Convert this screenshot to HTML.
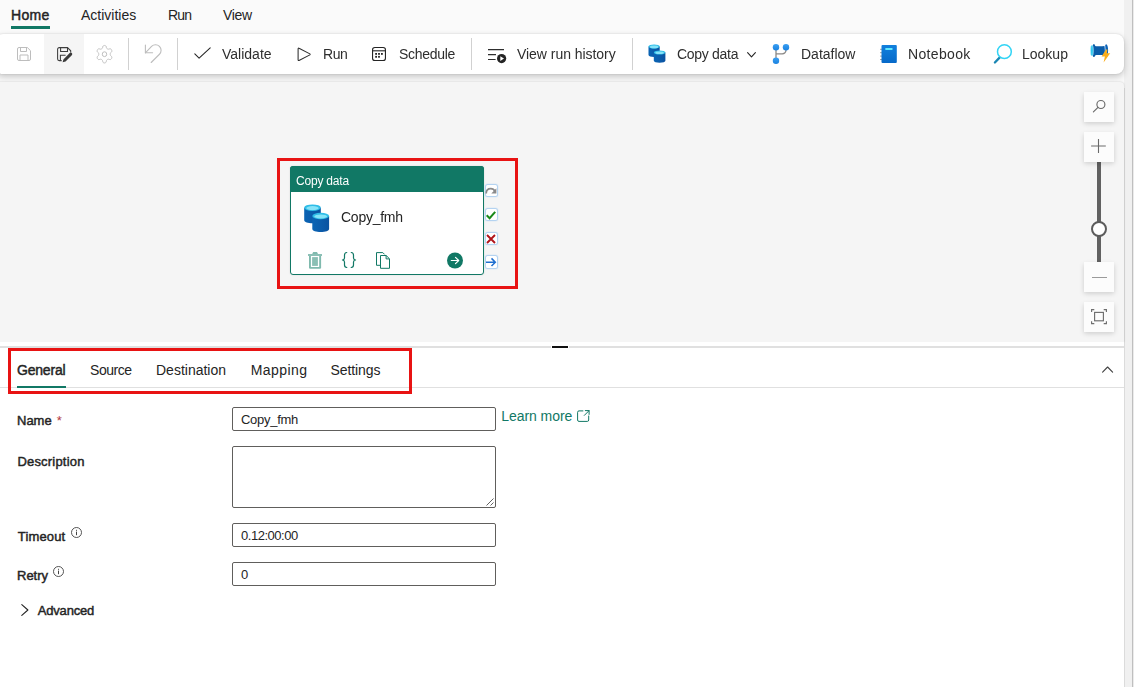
<!DOCTYPE html>
<html lang="en">
<head>
<meta charset="utf-8">
<title>Copy data</title>
<style>
*{box-sizing:border-box;margin:0;padding:0}
html,body{width:1134px;height:687px;overflow:hidden}
body{background:#fafafa;font-family:"Liberation Sans",sans-serif;color:#242424;position:relative}
.abs{position:absolute}
.t{position:absolute;white-space:nowrap;line-height:20px;font-size:14px;color:#242424;transform-origin:0 50%}
.sb{font-weight:normal;-webkit-text-stroke:.45px currentColor}
svg{position:absolute;overflow:visible}
/* top tabs */
#tabs .t{top:5px}
.g{will-change:transform}
#tb .t{will-change:transform;color:#2e2e2e}
/* toolbar */
#toolbar{left:-5px;top:34px;width:1129px;height:40px;background:#fff;border-radius:8px;box-shadow:0 0 2px rgba(0,0,0,.14),0 3px 7px rgba(0,0,0,.20)}
.sep{position:absolute;width:1px;background:#d1d1d1;top:38px;height:32px}
/* canvas */
#canvas{left:-5px;top:82px;width:1129px;height:260px;background:#f5f5f5;border-radius:4px 4px 0 0;box-shadow:0 0 2px rgba(0,0,0,.20)}
.zb{position:absolute;left:1084px;width:30px;height:30px;background:#fcfcfc;box-shadow:0 1.500px 5px rgba(0,0,0,.17)}
.hb{position:absolute;left:485.500px;width:11.500px;height:11.500px;background:#fff;border-radius:1.500px;box-shadow:0 0 1.200px 1px #a9cdf0}
/* panel */
#panel{left:0;top:346px;width:1124px;height:341px;background:#fff;border-top:2px solid #e0e0e0}
.inp{position:absolute;left:232px;width:264px;height:24px;border:1px solid #605e5c;border-radius:2px;background:#fff;font-size:13px;line-height:24px;padding-left:8px;color:#242424}
.lbl{position:absolute;left:17px;font-size:13px;-webkit-text-stroke:.45px currentColor;line-height:18px;color:#242424;white-space:nowrap}
</style>
</head>
<body>
<!-- right gutter -->
<div class="abs" style="left:1124px;top:0;width:10px;height:687px;background:#f0f0f0"></div>
<div class="abs" style="left:1132px;top:0;width:1px;height:687px;background:#bfbfbf"></div>
<div class="abs" style="left:1133px;top:0;width:1px;height:687px;background:#ebebeb"></div>
<div class="abs" style="left:1124px;top:88px;width:1px;height:599px;background:#dbdbdb"></div>

<!-- top tabs -->
<div id="tabs">
  <span class="t sb" style="left:11px;letter-spacing:.3px">Home</span>
  <span class="t" style="left:81px">Activities</span>
  <span class="t" style="left:167.900px;letter-spacing:-.75px">Run</span>
  <span class="t" style="left:223px;letter-spacing:-.3px">View</span>
  <div class="abs" style="left:11px;top:26px;width:39px;height:3px;background:#117865"></div>
</div>

<!-- toolbar -->
<div id="toolbar" class="abs"></div>
<div class="abs" style="left:44px;top:34px;width:40px;height:40px;background:#f5f5f5"></div>
<div class="sep" style="left:128px"></div>
<div class="sep" style="left:177px"></div>
<div class="sep" style="left:471px"></div>
<div class="sep" style="left:632px"></div>

<div id="tb">
  <span class="t" style="left:222px;top:44px">Validate</span>
  <span class="t" style="left:323px;top:44px;letter-spacing:-.4px">Run</span>
  <span class="t" style="left:398.600px;top:44px;letter-spacing:-.3px">Schedule</span>
  <span class="t" style="left:517px;top:44px;letter-spacing:-.04px">View run history</span>
  <span class="t" style="left:677.400px;top:44px;letter-spacing:-.3px">Copy data</span>
  <span class="t" style="left:801px;top:44px">Dataflow</span>
  <span class="t" style="left:908.200px;top:44px;letter-spacing:.34px">Notebook</span>
  <span class="t" style="left:1022px;top:44px">Lookup</span>
</div>


<!-- toolbar icons -->
<svg id="i-save" style="left:17px;top:47px" width="14" height="14" viewBox="0 0 14 14" fill="none" stroke="#bdbdbd" stroke-width="1">
  <path d="M2 .5h8.3l3.2 3.2V12a1.5 1.5 0 0 1-1.500 1.500H2A1.500 1.500 0 0 1 .5 12V2A1.500 1.500 0 0 1 2 .5z"/>
  <path d="M3.500 .5v4h6v-4M3 13.500v-5.500h8v5.500"/>
</svg>
<svg id="i-saveas" style="left:57px;top:46.700px" width="16" height="15" viewBox="0 0 16 15" fill="none" stroke="#3d3d3d" stroke-width="1.050">
  <path d="M4.700 13.600H2.200A1.600 1.600 0 0 1 .6 12V2.200A1.600 1.600 0 0 1 2.200 .6h8.300l3.200 3.200v1.700"/>
  <path d="M3.600 .7v3.800h6.900V.8M3.400 13.500V8.200h5.200"/>
  <path d="M6.400 12.400l6.300-6.300a1.450 1.450 0 0 1 2.100 2.100l-6.300 6.300-2.900.8z" fill="#3a3a3a" stroke="none"/>
</svg>
<svg id="i-gear" style="left:95.500px;top:44.800px;transform:scaleX(.93);transform-origin:8.500px 9px" width="17" height="19" viewBox="0 0 17 19" fill="none" stroke="#bdbdbd" stroke-width="1">
  <circle cx="8.500" cy="9.200" r="2.400"/>
  <path d="M14.65 9.20 L14.67 8.93 L14.73 8.66 L14.82 8.37 L14.96 8.06 L15.17 7.72 L15.70 7.27 L16.19 6.77 L16.34 6.35 L16.38 5.94 L16.34 5.54 L16.24 5.17 L16.08 4.83 L15.86 4.51 L15.59 4.24 L15.26 4.01 L14.89 3.84 L14.45 3.75 L13.77 3.93 L13.12 4.16 L12.72 4.17 L12.38 4.14 L12.08 4.08 L11.82 3.99 L11.58 3.87 L11.35 3.72 L11.14 3.54 L10.94 3.31 L10.74 3.03 L10.55 2.68 L10.43 2.00 L10.25 1.32 L9.95 0.99 L9.61 0.75 L9.25 0.58 L8.88 0.48 L8.50 0.45 L8.12 0.48 L7.75 0.58 L7.39 0.75 L7.05 0.99 L6.75 1.32 L6.57 2.00 L6.45 2.68 L6.26 3.03 L6.06 3.31 L5.86 3.54 L5.65 3.72 L5.43 3.87 L5.18 3.99 L4.92 4.08 L4.62 4.14 L4.28 4.17 L3.88 4.16 L3.23 3.93 L2.55 3.75 L2.11 3.84 L1.74 4.01 L1.41 4.24 L1.14 4.51 L0.92 4.82 L0.76 5.17 L0.66 5.54 L0.62 5.94 L0.66 6.35 L0.81 6.77 L1.30 7.27 L1.83 7.72 L2.04 8.06 L2.18 8.37 L2.27 8.66 L2.33 8.93 L2.35 9.20 L2.33 9.47 L2.27 9.74 L2.18 10.03 L2.04 10.34 L1.83 10.68 L1.30 11.13 L0.81 11.63 L0.66 12.05 L0.62 12.46 L0.66 12.86 L0.76 13.23 L0.92 13.57 L1.14 13.89 L1.41 14.16 L1.74 14.39 L2.11 14.56 L2.55 14.65 L3.23 14.47 L3.88 14.24 L4.28 14.23 L4.62 14.26 L4.92 14.32 L5.18 14.41 L5.42 14.53 L5.65 14.68 L5.86 14.86 L6.06 15.09 L6.26 15.37 L6.45 15.72 L6.57 16.40 L6.75 17.08 L7.05 17.41 L7.39 17.65 L7.75 17.82 L8.12 17.92 L8.50 17.95 L8.88 17.92 L9.25 17.82 L9.61 17.65 L9.95 17.41 L10.25 17.08 L10.43 16.40 L10.55 15.72 L10.74 15.37 L10.94 15.09 L11.14 14.86 L11.35 14.68 L11.57 14.53 L11.82 14.41 L12.08 14.32 L12.38 14.26 L12.72 14.23 L13.12 14.24 L13.77 14.47 L14.45 14.65 L14.89 14.56 L15.26 14.39 L15.59 14.16 L15.86 13.89 L16.08 13.57 L16.24 13.23 L16.34 12.86 L16.38 12.46 L16.34 12.05 L16.19 11.63 L15.70 11.13 L15.17 10.68 L14.96 10.34 L14.82 10.03 L14.73 9.74 L14.67 9.47z" stroke-linejoin="round"/>
</svg>
<svg id="i-undo" style="left:144px;top:44px" width="18" height="19" viewBox="0 0 18 19" fill="none" stroke="#bdbdbd" stroke-width="1.100" stroke-linecap="round" stroke-linejoin="round">
  <path d="M1.400 1v7.800h7.200"/>
  <path d="M1.400 8.800L7.540 2.340A5.600 5.600 0 0 1 15.460 10.260L7.200 18.500"/>
</svg>
<svg id="i-check" style="left:194px;top:47.300px" width="17" height="12" viewBox="0 0 17 12" fill="none" stroke="#242424" stroke-width="1.050" stroke-linecap="round" stroke-linejoin="round">
  <path d="M.8 6.800l4.300 4.300L16.200.8"/>
</svg>
<svg id="i-play" style="left:297.300px;top:46.600px" width="15" height="15" viewBox="0 0 15 15" fill="none" stroke="#2e2e2e" stroke-width="1.050" stroke-linejoin="round">
  <path d="M1.100 1.700v11.300a.6.600 0 0 0 .9.500l10.900-5.650a.6.600 0 0 0 0-1L2 1.200a.6.600 0 0 0-.9.500z"/>
</svg>
<svg id="i-cal" style="left:372px;top:47px" width="14" height="14" viewBox="0 0 14 14" fill="none" stroke="#242424" stroke-width="1.100">
  <rect x=".55" y=".55" width="12.900" height="12.900" rx="2.300"/>
  <path d="M.6 3.800h12.800"/>
  <g fill="#242424" stroke="none"><rect x="3.200" y="6" width="1.800" height="1.800"/><rect x="6.100" y="6" width="1.800" height="1.800"/><rect x="9" y="6" width="1.800" height="1.800"/><rect x="3.200" y="8.900" width="1.800" height="1.800"/><rect x="6.100" y="8.900" width="1.800" height="1.800"/></g>
</svg>
<svg id="i-hist" style="left:488px;top:49px" width="19" height="15" viewBox="0 0 19 15" fill="none" stroke="#2e2e2e" stroke-width="1.100">
  <path d="M0 .6h16M0 5.600h8M0 10.500h7.600"/>
  <circle cx="13.600" cy="9.600" r="4.600" fill="#242424" stroke="none"/>
  <path d="M12.300 7.300v4.600l3.700-2.300z" fill="#fff" stroke="none"/>
</svg>

<!-- colored toolbar icons -->
<svg id="i-copy" style="left:648px;top:44px" width="18" height="19" viewBox="0 0 18 19">
  <defs>
    <linearGradient id="cylg" x1="0" x2="1" y1="0" y2="0"><stop offset="0" stop-color="#0a64b4"/><stop offset=".5" stop-color="#0b5cab"/><stop offset="1" stop-color="#0a52a0"/></linearGradient>
    <linearGradient id="cylt" x1="0" x2="0" y1="0" y2="1"><stop offset="0" stop-color="#35c1e8"/><stop offset="1" stop-color="#7fe3f7"/></linearGradient>
  </defs>
  <path d="M.5 2.600v8.300c0 1.100 2.500 2 5.600 2s5.600-.9 5.600-2V2.600z" fill="url(#cylg)"/>
  <ellipse cx="6.100" cy="2.600" rx="5.600" ry="2.100" fill="#2fbde7"/>
  <ellipse cx="6.100" cy="2.900" rx="4.200" ry="1.300" fill="#86e3f8"/>
  <path d="M5.800 8.500v8.300c0 1.100 2.500 2 5.800 2s5.800-.9 5.800-2V8.500z" fill="url(#cylg)"/>
  <ellipse cx="11.600" cy="8.500" rx="5.800" ry="2.100" fill="#2fbde7"/>
  <ellipse cx="11.600" cy="8.800" rx="4.300" ry="1.300" fill="#86e3f8"/>
</svg>
<svg id="i-chev" style="left:747px;top:52px" width="10" height="6" viewBox="0 0 10 6" fill="none" stroke="#242424" stroke-width="1.100" stroke-linecap="round" stroke-linejoin="round">
  <path d="M.6 .6l3.900 4.200L8.400 .6"/>
</svg>
<svg id="i-flow" style="left:772px;top:43px" width="18" height="22" viewBox="0 0 18 22">
  <path d="M4 4.200v13.500M4 10.800h6.300a3.700 3.700 0 0 0 3.700-3.700V4.200" fill="none" stroke="#8a8886" stroke-width="1.300"/>
  <defs><linearGradient id="dfg" x1="0" x2="0" y1="0" y2="1"><stop offset="0" stop-color="#3a9ff2"/><stop offset="1" stop-color="#1a82e0"/></linearGradient></defs>
  <circle cx="4" cy="4.200" r="3.200" fill="url(#dfg)"/>
  <circle cx="14" cy="4.200" r="3.200" fill="url(#dfg)"/>
  <circle cx="4" cy="17.700" r="3.200" fill="url(#dfg)"/>
</svg>
<svg id="i-nb" style="left:880px;top:45px" width="17" height="18" viewBox="0 0 17 18">
  <defs><linearGradient id="nbg" x1="0" x2="0" y1="0" y2="1"><stop offset="0" stop-color="#1180dd"/><stop offset="1" stop-color="#0669c9"/></linearGradient></defs>
  <g stroke="#9a9a9a" stroke-width="1" stroke-linecap="round"><path d="M.5 4.300h2M.5 7.700h2M.5 11.100h2M.5 14.500h2"/></g>
  <rect x="1.500" y="0" width="15.300" height="17.900" rx="1" fill="url(#nbg)"/>
  <rect x="5.300" y="3.100" width="7.200" height="2" rx=".5" fill="#5fe9ff"/>
</svg>
<svg id="i-look" style="left:993px;top:43px" width="20" height="21" viewBox="0 0 20 21" fill="none">
  <path d="M1.900 19.500l4.900-5.100" stroke="#1a86b3" stroke-width="2.300" stroke-linecap="round"/>
  <circle cx="11.400" cy="8.700" r="6.900" stroke="#32d4f5" stroke-width="1.500" fill="#fff"/>
</svg>
<svg id="i-spool" style="left:1090px;top:44px" width="21" height="19" viewBox="0 0 21 19">
  <path d="M4 1.900c3 .6 7.500.6 10.500 0v9.600c-3-.6-7.500-.6-10.500 0z" fill="#0a5ca9"/>
  <ellipse cx="16.200" cy="6.600" rx="1.900" ry="6.400" fill="#0b62b8"/>
  <path d="M14.700 1.200c1.100 1.600 1.100 9.200 0 10.800" stroke="#e6f4ff" stroke-width=".5" fill="none"/>
  <ellipse cx="3.900" cy="6.600" rx="1.900" ry="6.500" fill="#0a5ca9"/>
  <ellipse cx="1.900" cy="6.700" rx="1.500" ry="5.400" fill="#2ec5ec" stroke="#dff6fd" stroke-width=".5"/>
  <path d="M16 5.600l-4.400 7h3.300l-1.300 5.800 6.600-9.200h-3.400l.7-3.600z" fill="#fbae1c"/>
</svg>

<!-- canvas -->
<div id="canvas" class="abs"></div>

<!-- red highlight box around node -->
<div class="abs" style="left:277px;top:158px;width:241px;height:131px;border:3px solid #e81313"></div>

<!-- activity node -->
<div class="abs" style="left:290px;top:166px;width:194px;height:109px;background:#fff;border:1px solid #117865;border-radius:3px;box-shadow:0 0 2px rgba(0,0,0,.12)"></div>
<div class="abs" style="left:290px;top:166px;width:194px;height:26px;background:#117865;border-radius:3px 3px 0 0"></div>
<span class="t g" style="left:296px;top:171px;font-size:12px;color:#fff;letter-spacing:-.2px">Copy data</span>
<span class="t g" style="left:341.400px;top:207px;font-size:14px;letter-spacing:-.26px">Copy_fmh</span>

<svg id="n-copy" style="left:304px;top:204px" width="26" height="29" viewBox="0 0 26 29">
  <path d="M.2 3.700v12.500c0 1.700 3.700 3 8.300 3s8.300-1.300 8.300-3V3.700z" fill="url(#cylg)"/>
  <ellipse cx="8.500" cy="3.700" rx="8.300" ry="3.300" fill="#2fbde7"/>
  <ellipse cx="8.500" cy="4.100" rx="6.300" ry="2" fill="#86e3f8"/>
  <path d="M8.300 12v12.900c0 1.700 3.700 3 8.400 3s8.400-1.300 8.400-3V12z" fill="url(#cylg)"/>
  <ellipse cx="16.700" cy="12" rx="8.400" ry="3.300" fill="#2fbde7"/>
  <ellipse cx="16.700" cy="12.400" rx="6.400" ry="2" fill="#86e3f8"/>
</svg>

<svg id="n-trash" style="left:308px;top:252px" width="14" height="17" viewBox="0 0 14 17" fill="#80baae">
  <path d="M5.200 0h3.800l1 2H4.200z"/>
  <rect x="0" y="2.100" width="14" height="1.800"/>
  <path d="M1 3.900h12.100v12.200l-.8.700H1.800l-.8-.7zM2.900 3.900v11.100h8.300V3.900z" fill-rule="evenodd"/>
  <rect x="4.100" y="5.100" width="5.800" height="8.800" fill="#8bbfb4"/>
</svg>
<svg id="n-brace" style="left:342px;top:252px" width="14" height="16" viewBox="0 0 14 16" fill="none" stroke="#117865" stroke-width="1.200" stroke-linecap="round" stroke-linejoin="round">
  <path d="M4.800 .5C3.200 .7 2.500 1.600 2.500 3v3C2.500 7.200 1.800 7.800 .4 8c1.400 .2 2.100 .8 2.100 2v3c0 1.400 .7 2.300 2.300 2.500"/>
  <path d="M9.200 .5c1.600 .2 2.300 1.100 2.300 2.500v3c0 1.200 .7 1.800 2.100 2-1.400 .2-2.100 .8-2.100 2v3c0 1.400-.7 2.300-2.300 2.500"/>
</svg>
<svg id="n-dup" style="left:376px;top:252px" width="15" height="17" viewBox="0 0 15 17" fill="none" stroke="#117865" stroke-width="1" stroke-linejoin="round">
  <path d="M4.500 13.300H.5V.6h6.300l1.800 1.800"/>
  <path d="M4.500 3.500h5.700l3.300 3.300v9.500H4.500z" fill="#fff"/>
  <path d="M10.100 3.600v3.300h3.300"/>
</svg>
<svg id="n-go" style="left:447px;top:252px" width="16" height="17" viewBox="0 0 16 17">
  <circle cx="8" cy="8.500" r="8" fill="#117865"/>
  <path d="M4.300 8.500h7.200M8.500 5.300l3.200 3.200-3.200 3.200" fill="none" stroke="#fff" stroke-width="1.200" stroke-linecap="round" stroke-linejoin="round"/>
</svg>

<!-- node side handles -->
<div class="hb" style="top:184.800px"></div>
<div class="hb" style="top:208.700px"></div>
<div class="hb" style="top:232.700px"></div>
<div class="hb" style="top:256.200px"></div>
<svg style="left:485px;top:185px" width="12" height="12" viewBox="0 0 12 12" fill="none"><path d="M1.200 8.500c0-3.300 2-4.800 4.600-4.800 1.900 0 3.300.9 4.100 2.600" stroke="#8a8a8a" stroke-width="1.700"/><path d="M11.400 3.200v5.200H6.300z" fill="#8a8a8a"/></svg>
<svg style="left:485px;top:209px" width="12" height="12" viewBox="0 0 12 12" fill="none"><path d="M1.700 6.300l2.900 2.900 5.600-6.400" stroke="#1a8a1a" stroke-width="2"/></svg>
<svg style="left:485px;top:233px" width="12" height="12" viewBox="0 0 12 12" fill="none"><path d="M2 2l8 8M10 2l-8 8" stroke="#b0141a" stroke-width="1.900"/></svg>
<svg style="left:485px;top:256px" width="12" height="12" viewBox="0 0 12 12" fill="none"><path d="M1 6.200h9M6.500 2.400l3.800 3.800-3.800 3.800" stroke="#1f6fd0" stroke-width="1.500"/></svg>

<!-- zoom controls -->
<div class="abs" style="left:1097px;top:162px;width:4px;height:100px;background:#616161"></div>
<div class="zb" style="top:92px"></div>
<div class="zb" style="top:132px"></div>
<div class="zb" style="top:262px"></div>
<div class="zb" style="top:302px"></div>
<div class="abs" style="left:1091px;top:221px;width:16px;height:16px;border-radius:50%;border:2px solid #5c5c5c;background:#fff"></div>
<svg style="left:1092px;top:99px" width="14" height="15" viewBox="0 0 14 15" fill="none" stroke="#6a6a6a" stroke-width="1.150" stroke-linecap="round"><circle cx="8.900" cy="5.500" r="4"/><path d="M6 8.400L1.400 12.900"/></svg>
<svg style="left:1091px;top:139px" width="15" height="14" viewBox="0 0 15 14" fill="none" stroke="#6a6a6a" stroke-width="1.100"><path d="M7.500 .1v13.800M.1 7h14.700"/></svg>
<svg style="left:1091px;top:269px" width="16" height="16" viewBox="0 0 16 16" fill="none" stroke="#9a9a9a" stroke-width="1"><path d="M1 8.500h15"/></svg>
<svg style="left:1091px;top:309px" width="16" height="16" viewBox="0 0 16 16" fill="none" stroke="#6e6e6e" stroke-width="1.150"><rect x="3.600" y="3.400" width="8.800" height="8.400"/><path d="M.6 3V.6h2.700M12.700 .6h2.700V3M15.400 12.200v2.400h-2.700M3.300 14.600H.6v-2.400"/></svg>

<!-- bottom panel -->
<div class="abs" style="left:0;top:342px;width:1124px;height:345px;background:#fff"></div>
<div class="abs" style="left:0;top:346px;width:1124px;height:2px;background:#e0e0e0"></div>
<div class="abs" style="left:551px;top:346px;width:18px;height:2px;background:#fff"></div>
<div class="abs" style="left:552px;top:346px;width:16px;height:2px;background:#111"></div>
<div class="abs" style="left:0;top:387px;width:1124px;height:1px;background:#e0e0e0"></div>

<!-- panel tabs -->
<span class="t sb" style="left:17px;top:360px;letter-spacing:-.2px">General</span>
<span class="t" style="left:90px;top:360px;letter-spacing:-.46px">Source</span>
<span class="t" style="left:156px;top:360px">Destination</span>
<span class="t" style="left:250.700px;top:360px;letter-spacing:.43px">Mapping</span>
<span class="t" style="left:330.500px;top:360px;letter-spacing:-.1px">Settings</span>
<div class="abs" style="left:17px;top:386px;width:49px;height:2px;background:#117865"></div>
<div class="abs" style="left:8px;top:348px;width:404px;height:46px;border:3px solid #e81313"></div>
<svg style="left:1102px;top:365.600px" width="12" height="7" viewBox="0 0 12 7" fill="none" stroke="#424242" stroke-width="1.100" stroke-linecap="round" stroke-linejoin="round"><path d="M.6 6.200L5.600 1l5 5.200"/></svg>

<!-- form -->
<span class="lbl" style="top:412px">Name <span style="color:#b3373d;-webkit-text-stroke:0;margin-left:1.500px">*</span></span>
<span class="lbl" style="top:453px;left:17.400px;letter-spacing:.2px">Description</span>
<span class="lbl" style="top:528px;left:17.800px;letter-spacing:.15px">Timeout</span>
<span class="lbl" style="top:567px">Retry</span>
<span class="lbl" style="left:37.800px;top:602px;letter-spacing:-.2px">Advanced</span>
<svg style="left:21px;top:604px" width="8" height="12" viewBox="0 0 8 12" fill="none" stroke="#242424" stroke-width="1.100" stroke-linecap="round" stroke-linejoin="round"><path d="M.8 .7L6.900 6 .8 11.300"/></svg>
<svg class="info" style="left:71px;top:527px" width="11" height="11" viewBox="0 0 11 11" fill="none" stroke="#424242" stroke-width=".9"><circle cx="5.500" cy="5.500" r="5"/><path d="M5.500 4.600v3.600M5.500 2.800v1" stroke-width="1"/></svg>
<svg class="info" style="left:53px;top:566px" width="11" height="11" viewBox="0 0 11 11" fill="none" stroke="#424242" stroke-width=".9"><circle cx="5.500" cy="5.500" r="5"/><path d="M5.500 4.600v3.600M5.500 2.800v1" stroke-width="1"/></svg>

<div class="inp" style="top:407px;letter-spacing:-.28px">Copy_fmh</div>
<div class="inp" style="top:446px;height:62px"></div>
<svg style="left:486px;top:498px" width="8" height="8" viewBox="0 0 8 8" fill="none" stroke="#616161" stroke-width="1"><path d="M.5 7.500l7-7M4.500 7.500l3-3"/></svg>
<div class="inp" style="top:523px;letter-spacing:-.48px">0.12:00:00</div>
<div class="inp" style="top:562px">0</div>

<span class="t" style="left:501.200px;top:406px;color:#117865;letter-spacing:-.05px">Learn more</span>
<svg style="left:577px;top:410px" width="13" height="12" viewBox="0 0 13 12" fill="none" stroke="#117865" stroke-width="1" stroke-linejoin="round"><path d="M6.300 .9H2A1.400 1.400 0 0 0 .6 2.300V10A1.400 1.400 0 0 0 2 11.400h8.300a1.400 1.400 0 0 0 1.400-1.400V5.600"/><path d="M8.300 .6h3.800v3.800M12 .7L7.300 5.400" stroke-linecap="round"/></svg>

</body>
</html>
